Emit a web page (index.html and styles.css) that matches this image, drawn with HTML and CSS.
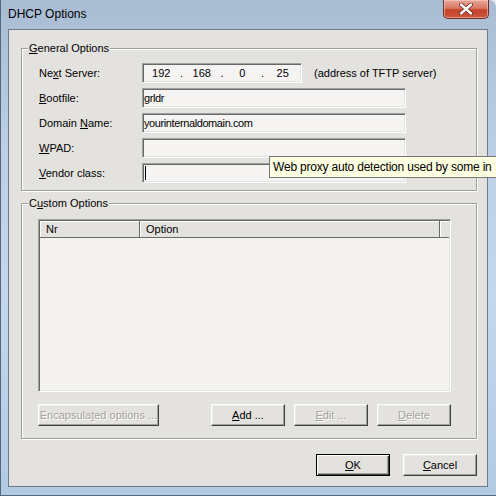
FILE: index.html
```html
<!DOCTYPE html>
<html lang="en">

<head>
    <meta charset="UTF-8">
    <title>DHCP Options</title>
    <link rel="stylesheet" href="styles.css">
</head>

<body>
    <div class="window">
        <div class="titlebar">
            <span class="title">DHCP Options</span>
            <div class="close-btn">
                <svg width="16" height="12" viewBox="0 0 16 12">
                    <path d="M3 1.5 L13 10.5 M13 1.5 L3 10.5" stroke="#6b2116" stroke-width="4" stroke-linecap="round" />
                    <path d="M3 1.5 L13 10.5 M13 1.5 L3 10.5" stroke="#fff" stroke-width="2.4" stroke-linecap="round" />
                </svg>
            </div>
        </div>

        <div class="client">
            <!-- General options -->
            <div class="group group-general">
                <div class="group-title"><u>G</u>eneral Options</div>
                <div class="form-rows">
                    <div class="row">
                        <label>Ne<u>x</u>t Server:</label>
                        <div class="ip-box">
                            <span class="octet">192</span><span class="dot">.</span>
                            <span class="octet">168</span><span class="dot">.</span>
                            <span class="octet">0</span><span class="dot">.</span>
                            <span class="octet">25</span>
                        </div>
                        <span class="hint">(address of TFTP server)</span>
                    </div>
                    <div class="row">
                        <label><u>B</u>ootfile:</label>
                        <div class="field">grldr</div>
                    </div>
                    <div class="row">
                        <label>Domain <u>N</u>ame:</label>
                        <div class="field">yourinternaldomain.com</div>
                    </div>
                    <div class="row">
                        <label><u>W</u>PAD:</label>
                        <div class="field"></div>
                    </div>
                    <div class="row">
                        <label><u>V</u>endor class:</label>
                        <div class="field"><span class="caret"></span></div>
                    </div>
                </div>
            </div>

            <!-- Custom options -->
            <div class="group group-custom">
                <div class="group-title">C<u>u</u>stom Options</div>
                <div class="custom-body">
                    <div class="list">
                        <div class="list-header">
                            <div class="col col-nr">Nr</div>
                            <div class="col col-option">Option</div>
                            <div class="col col-rest"></div>
                        </div>
                    </div>
                    <div class="list-buttons">
                        <button class="btn btn-wide" disabled>Encapsula<u>t</u>ed options ...</button>
                        <button class="btn btn-add"><u>A</u>dd ...</button>
                        <button class="btn" disabled><u>E</u>dit ...</button>
                        <button class="btn" disabled><u>D</u>elete</button>
                    </div>
                </div>
            </div>

            <div class="dialog-buttons">
                <button class="btn btn-default"><u>O</u>K</button>
                <button class="btn"><u>C</u>ancel</button>
            </div>
        </div>

        <div class="tooltip">Web proxy auto detection used by some in</div>
    </div>
</body>

</html>
```

FILE: styles.css
```css
* {
    box-sizing: border-box;
}

body {
    margin: 0;
    background-color: #e9ecef;
    font-family: "Liberation Sans", Arial, sans-serif;
}

.window {
    position: relative;
    width: 496px;
    height: 496px;
    overflow: hidden;
    display: flex;
    flex-direction: column;
    padding: 0 8px 8px 7px;
    background: linear-gradient(180deg, #a8bcd3 0%, #bccfe5 30%, #c4d7ec 60%, #b3cae4 100%);
    border-left: 1px solid #56677c;
    border-bottom: 1px solid #56677c;
    border-radius: 0 7px 0 0;
}

.titlebar {
    height: 29px;
    display: flex;
    justify-content: space-between;
    align-items: flex-start;
    margin-left: -7px;
    margin-right: -8px;
    padding: 0 7px 0 7px;
}

.title {
    margin-top: 7px;
    font-size: 12px;
    line-height: 15px;
    color: #000;
}

.close-btn {
    width: 46px;
    height: 19px;
    display: flex;
    align-items: center;
    justify-content: center;
    background: linear-gradient(180deg, #e9a697 0%, #d97a64 45%, #c7432a 55%, #c8553b 100%);
    border: 1px solid #6d2f28;
    border-top: none;
    border-radius: 0 0 5px 5px;
    box-shadow: inset 0 0 0 1px rgba(255, 220, 210, 0.5);
}

.client {
    flex: 1;
    display: flex;
    flex-direction: column;
    background-color: #e4e2df;
    border: 1px solid #6d7b8c;
    font-size: 11px;
    color: #000;
}

/* etched group box */
.group {
    margin: 0 10px 0 12px;
    border: 1px solid #a19f9b;
    box-shadow: inset 1px 1px 0 #fff, 1px 1px 0 #fff;
}

.group-general {
    margin-top: 18px;
}

.group-custom {
    margin-top: 12px;
}

.group-title {
    width: fit-content;
    margin: -8px 0 0 6px;
    padding: 0 1px;
    line-height: 14px;
    background-color: #e4e2df;
}

.form-rows {
    display: flex;
    flex-direction: column;
    gap: 5px;
    padding: 8px 0 7px 17px;
}

.row {
    display: flex;
    align-items: center;
    height: 20px;
}

.row label {
    width: 103px;
}

.field,
.ip-box {
    height: 20px;
    background-color: #f5f4f2;
    border: 1px solid;
    border-color: #a0a0a0 #fff #fff #a0a0a0;
    box-shadow: inset 1px 1px 0 #696969, inset -1px -1px 0 #e3e3e3;
    display: flex;
    align-items: center;
    padding: 0 2px;
    line-height: 13px;
}

.field {
    width: 264px;
    padding-left: 1px;
    letter-spacing: -0.4px;
}

.ip-box {
    width: 160px;
}

.octet {
    width: 33px;
    text-align: center;
}

.dot {
    width: 8px;
    text-align: center;
}

.hint {
    margin-left: 12px;
}

.caret {
    width: 1px;
    height: 14px;
    margin-left: 1px;
    background-color: #000;
}

.custom-body {
    padding: 9px 0 12px 16px;
}

.list {
    width: 413px;
    height: 173px;
    background-color: #f4f3f0;
    border: 1px solid;
    border-color: #a0a0a0 #fff #fff #a0a0a0;
    box-shadow: inset 1px 1px 0 #696969, inset -1px -1px 0 #e3e3e3;
    padding: 1px;
}

.list-header {
    display: flex;
    height: 17px;
}

.col {
    height: 17px;
    line-height: 16px;
    padding-left: 6px;
    background-color: #e4e2df;
    border-right: 1px solid #696969;
    border-bottom: 1px solid #696969;
    box-shadow: inset 1px 1px 0 #fff;
}

.col-nr {
    width: 100px;
}

.col-option {
    width: 300px;
}

.col-rest {
    flex: 1;
    border-right: none;
}

.list-buttons {
    width: 413px;
    display: flex;
    gap: 9px;
    margin-top: 12px;
}

.btn {
    width: 74px;
    height: 22px;
    padding: 0;
    font-family: "Liberation Sans", Arial, sans-serif;
    font-size: 11px;
    color: #000;
    background-color: #e4e2df;
    border: 1px solid;
    border-color: #fff #404040 #404040 #fff;
    box-shadow: inset -1px -1px 0 #a0a0a0, inset 1px 1px 0 #ecebe8;
}

.btn:disabled {
    color: #a3a19d;
    text-shadow: 1px 1px 0 #fff;
}

.btn-wide {
    width: 121px;
}

.btn-add {
    margin-left: auto;
}

.btn-default {
    border: 1px solid #000;
    box-shadow: inset 1px 1px 0 #fff, inset -1px -1px 0 #404040, inset -2px -2px 0 #a0a0a0;
}

.dialog-buttons {
    display: flex;
    justify-content: flex-end;
    gap: 13px;
    margin: 15px 10px 0 0;
}

.tooltip {
    position: absolute;
    left: 268px;
    top: 156px;
    width: 240px;
    height: 22px;
    padding-left: 3px;
    font-size: 12px;
    letter-spacing: -0.2px;
    line-height: 20px;
    white-space: nowrap;
    background-color: #ffffe1;
    border: 1px solid #767676;
}
```
